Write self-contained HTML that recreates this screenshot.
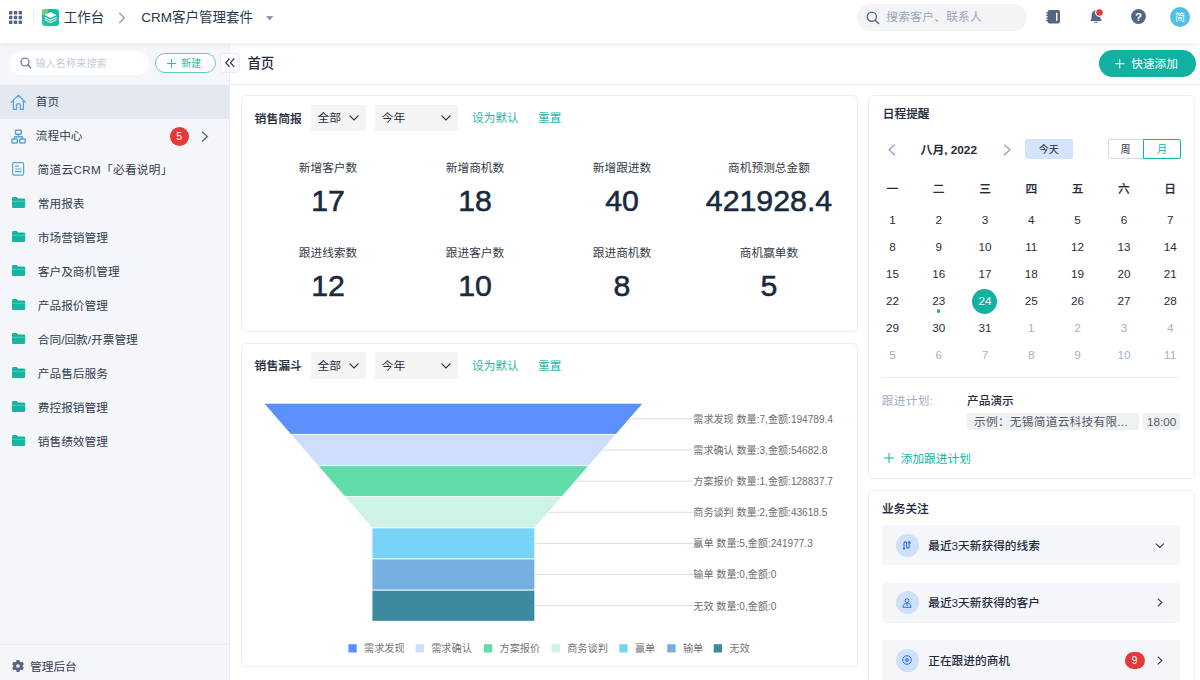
<!DOCTYPE html>
<html lang="zh-CN"><head><meta charset="utf-8"><title>CRM客户管理套件</title>
<style>
html,body{margin:0;padding:0;}
body{width:1200px;height:680px;overflow:hidden;background:#fff;position:relative;font-family:"Liberation Sans","Noto Sans CJK SC",sans-serif;}
.t{position:absolute;white-space:nowrap;font-family:"Liberation Sans","Noto Sans CJK SC",sans-serif;}
.b{position:absolute;box-sizing:border-box;}
svg{overflow:visible;}
svg text{font-family:"Liberation Sans","Noto Sans CJK SC",sans-serif;}
</style></head><body>
<div class="b" style="left:0.00px;top:42.00px;width:230.00px;height:638.00px;background:#f4f6f9;border-right:1px solid #e9ebef;"></div>
<div class="b" style="left:0.00px;top:0.00px;width:1200.00px;height:42.60px;background:#fff;box-shadow:0 1px 6px rgba(31,45,61,0.09);"></div>
<div class="b" style="left:230.00px;top:84.00px;width:970.00px;height:1.00px;background:#eceef0;"></div>
<svg class="b" style="left:9.20px;top:10.80px;" width="14" height="14" viewBox="0 0 14 14"><rect x="0.0" y="0.0" width="3.4" height="3.4" rx="0.6" fill="#566582"/><rect x="4.8" y="0.0" width="3.4" height="3.4" rx="0.6" fill="#566582"/><rect x="9.6" y="0.0" width="3.4" height="3.4" rx="0.6" fill="#566582"/><rect x="0.0" y="4.8" width="3.4" height="3.4" rx="0.6" fill="#566582"/><rect x="4.8" y="4.8" width="3.4" height="3.4" rx="0.6" fill="#566582"/><rect x="9.6" y="4.8" width="3.4" height="3.4" rx="0.6" fill="#566582"/><rect x="0.0" y="9.6" width="3.4" height="3.4" rx="0.6" fill="#566582"/><rect x="4.8" y="9.6" width="3.4" height="3.4" rx="0.6" fill="#566582"/><rect x="9.6" y="9.6" width="3.4" height="3.4" rx="0.6" fill="#566582"/></svg>
<div class="b" style="left:33.00px;top:9.00px;width:1.00px;height:17.00px;background:#eceef0;"></div>
<svg class="b" style="left:42.20px;top:8.80px;" width="17" height="17" viewBox="0 0 17 17"><defs><linearGradient id="lg" x1="0" y1="1" x2="1" y2="0"><stop offset="0" stop-color="#35cf92"/><stop offset="0.45" stop-color="#12b3a0"/><stop offset="1" stop-color="#17c0a6"/></linearGradient><clipPath id="lc"><rect x="0" y="0" width="17" height="17" rx="3.2"/></clipPath></defs>
<rect x="0" y="0" width="17" height="17" rx="3.2" fill="url(#lg)"/>
<g clip-path="url(#lc)"><circle cx="1.5" cy="1.5" r="4.6" fill="#6fcf7e"/><path d="M17 4 L17 17 L8 17 Z" fill="#22c7a4" opacity="0.6"/></g>
<path d="M8.5 3.1 L14.5 5.9 L8.5 9.0 L2.5 5.9 Z" fill="#fff"/>
<path d="M2.6 8.2 L8.5 11.2 L14.6 8.2" fill="none" stroke="#fff" stroke-width="1.1" stroke-linejoin="round"/>
<path d="M2.6 10.6 L8.5 13.6 L14.6 10.6" fill="none" stroke="#fff" stroke-width="1.1" stroke-linejoin="round" opacity="0.85"/></svg>
<div class="t" style="top:8.00px;font-size:13.5px;line-height:20px;color:#2a384b;left:63.80px;">工作台</div>
<svg class="b" style="left:118.00px;top:11.50px;" width="8" height="12" viewBox="0 0 8 12"><path d="M1.2 1 L6.4 6 L1.2 11" fill="none" stroke="#8a97b0" stroke-width="1.2"/></svg>
<div class="t" style="top:8.00px;font-size:13.5px;line-height:20px;color:#2a384b;left:141.30px;">CRM客户管理套件</div>
<svg class="b" style="left:266.00px;top:15.50px;" width="8" height="5" viewBox="0 0 8 5"><path d="M0 0 L7.4 0 L3.7 4.4 Z" fill="#8a97b0"/></svg>
<div class="b" style="left:857.00px;top:3.50px;width:169.50px;height:27.00px;background:#f3f4f6;border-radius:13.5px;"></div>
<svg class="b" style="left:865.50px;top:10.50px;" width="14" height="14" viewBox="0 0 14 14"><circle cx="5.8" cy="5.8" r="4.6" fill="none" stroke="#566582" stroke-width="1.3"/><path d="M9.2 9.2 L12.6 12.6" stroke="#566582" stroke-width="1.4" stroke-linecap="round"/></svg>
<div class="t" style="top:7.40px;font-size:11.7px;line-height:20px;color:#9aa5b8;left:886.20px;letter-spacing:0.3px;">搜索客户、联系人</div>
<svg class="b" style="left:1046.10px;top:9.50px;" width="14" height="14" viewBox="0 0 14 14"><rect x="1.6" y="0" width="12.4" height="13.5" rx="2" fill="#566582"/>
<rect x="10" y="2.8" width="1.4" height="8" fill="#fff"/>
<rect x="0" y="2.2" width="2.4" height="1.3" rx="0.6" fill="#566582"/><rect x="0" y="4.8" width="2.4" height="1.3" rx="0.6" fill="#566582"/><rect x="0" y="7.4" width="2.4" height="1.3" rx="0.6" fill="#566582"/><rect x="0" y="10" width="2.4" height="1.3" rx="0.6" fill="#566582"/></svg>
<svg class="b" style="left:1089.90px;top:9.90px;" width="12" height="14" viewBox="0 0 12 14"><path d="M6 0.4 C2.9 0.4 1.6 2.8 1.6 5.6 L1.6 8.6 L0.2 11 L11.8 11 L10.4 8.6 L10.4 5.6 C10.4 2.8 9.1 0.4 6 0.4 Z" fill="#566582"/>
<path d="M4.2 11.8 A1.9 1.9 0 0 0 7.8 11.8 Z" fill="#566582"/>
<circle cx="9.5" cy="2.5" r="4.4" fill="#fff"/><circle cx="9.5" cy="2.5" r="3.3" fill="#e5383b"/></svg>
<svg class="b" style="left:1130.90px;top:9.30px;" width="15" height="15" viewBox="0 0 15 15"><circle cx="7.5" cy="7.5" r="7.4" fill="#566582"/><text x="7.5" y="11.6" font-size="11.5" font-weight="700" fill="#fff" text-anchor="middle">?</text></svg>
<div class="b" style="left:1169.70px;top:6.80px;width:20.40px;height:20.40px;background:#4fbfe8;border-radius:10.2px;"></div>
<div class="t" style="top:7.50px;font-size:10px;line-height:20px;color:#fff;left:1170.00px;width:20px;text-align:center;">简</div>
<div class="b" style="left:10.00px;top:51.00px;width:138.50px;height:24.00px;background:#fff;border-radius:12px;"></div>
<svg class="b" style="left:19.50px;top:57.00px;" width="12" height="12" viewBox="0 0 12 12"><circle cx="5" cy="5" r="4" fill="none" stroke="#566582" stroke-width="1.1"/><path d="M8 8 L10.8 10.8" stroke="#566582" stroke-width="1.2" stroke-linecap="round"/></svg>
<div class="t" style="top:53.50px;font-size:10px;line-height:20px;color:#c3cbd9;left:35.40px;letter-spacing:0.2px;">输入名称来搜索</div>
<div class="b" style="left:154.70px;top:53.00px;width:61.60px;height:20.00px;background:#fff;border:1.1px solid #63cbc2;border-radius:10px;"></div>
<svg class="b" style="left:167.00px;top:58.50px;" width="9" height="9" viewBox="0 0 9 9"><path d="M4.5 0 V9 M0 4.5 H9" stroke="#2dbbb0" stroke-width="1"/></svg>
<div class="t" style="top:53.70px;font-size:10px;line-height:20px;color:#2dbbb0;left:181.30px;">新建</div>
<div class="b" style="left:220.40px;top:53.20px;width:19.20px;height:19.40px;background:#fff;border:1px solid #e9ecf0;border-radius:3px;"></div>
<svg class="b" style="left:225.20px;top:58.20px;" width="10" height="10" viewBox="0 0 10 10"><path d="M4.6 0.5 L0.8 4.7 L4.6 8.9 M9.2 0.5 L5.4 4.7 L9.2 8.9" fill="none" stroke="#2a384b" stroke-width="1.25"/></svg>
<div class="t" style="top:53.80px;font-size:13.4px;line-height:20px;color:#1f2d3d;font-weight:500;left:247.40px;">首页</div>
<div class="b" style="left:0.00px;top:85.00px;width:229.00px;height:34.00px;background:#e4e8f1;"></div>
<svg class="b" style="left:10.00px;top:94.00px;" width="17" height="17" viewBox="0 0 17 17"><path d="M1.2 8.4 L8.4 1.3 L15.6 8.4 M3.4 6.6 V15.3 H6.5 V11.4 A1.9 1.9 0 0 1 10.3 11.4 V15.3 H13.4 V6.6" fill="none" stroke="#5aa3d8" stroke-width="1.25" stroke-linejoin="round" stroke-linecap="round"/></svg>
<div class="t" style="top:92.20px;font-size:11.7px;line-height:20px;color:#313d4f;left:35.80px;">首页</div>
<svg class="b" style="left:11.00px;top:128.50px;" width="15" height="15" viewBox="0 0 15 15"><g fill="none" stroke="#5aa3d8" stroke-width="1.5"><rect x="4.5" y="1.2" width="5.8" height="4" rx="0.6"/><rect x="0.9" y="9.9" width="5.4" height="4" rx="0.6"/><rect x="8.7" y="9.9" width="5.4" height="4" rx="0.6"/><path d="M7.4 5.3 V7.7 M3.6 9.9 V8.4 A0.7 0.7 0 0 1 4.3 7.7 H10.7 A0.7 0.7 0 0 1 11.4 8.4 V9.9"/></g></svg>
<div class="t" style="top:126.10px;font-size:11.7px;line-height:20px;color:#313d4f;left:35.80px;">流程中心</div>
<div class="b" style="left:169.60px;top:126.50px;width:19.00px;height:19.00px;background:#e5383b;border-radius:9.5px;"></div>
<div class="t" style="top:126.30px;font-size:10.5px;line-height:20px;color:#fff;left:169.60px;width:19px;text-align:center;">5</div>
<svg class="b" style="left:200.50px;top:130.50px;" width="8" height="12" viewBox="0 0 8 12"><path d="M1 0.8 L6.4 5.6 L1 10.4" fill="none" stroke="#566582" stroke-width="1.3"/></svg>
<svg class="b" style="left:12.00px;top:162.00px;" width="13" height="14" viewBox="0 0 13 14"><g fill="none" stroke="#5aa3d8" stroke-width="1.2"><rect x="0.6" y="0.6" width="11" height="12.6" rx="1.4"/><path d="M3 4.2 H6.8 M3 7 H9.4 M3 9.7 H9.4"/></g></svg>
<div class="t" style="top:160.20px;font-size:11.7px;line-height:20px;color:#313d4f;left:37.60px;letter-spacing:0.28px;">简道云CRM「必看说明」</div>
<svg class="b" style="left:11.80px;top:197.20px;" width="14" height="11.5" viewBox="0 0 14 11.5"><path d="M0 1.4 A1.4 1.4 0 0 1 1.4 0 H4.6 L6.2 1.6 H11.9 A1.3 1.3 0 0 1 13.2 2.9 V9.7 A1.3 1.3 0 0 1 11.9 11 H1.3 A1.3 1.3 0 0 1 0 9.7 Z" fill="#14b5a1"/><path d="M0 4.3 H13.2" stroke="#7fd9cc" stroke-width="0.6"/></svg>
<div class="t" style="top:194.00px;font-size:11.7px;line-height:20px;color:#313d4f;left:37.80px;">常用报表</div>
<svg class="b" style="left:11.80px;top:231.20px;" width="14" height="11.5" viewBox="0 0 14 11.5"><path d="M0 1.4 A1.4 1.4 0 0 1 1.4 0 H4.6 L6.2 1.6 H11.9 A1.3 1.3 0 0 1 13.2 2.9 V9.7 A1.3 1.3 0 0 1 11.9 11 H1.3 A1.3 1.3 0 0 1 0 9.7 Z" fill="#14b5a1"/><path d="M0 4.3 H13.2" stroke="#7fd9cc" stroke-width="0.6"/></svg>
<div class="t" style="top:228.00px;font-size:11.7px;line-height:20px;color:#313d4f;left:37.80px;">市场营销管理</div>
<svg class="b" style="left:11.80px;top:265.20px;" width="14" height="11.5" viewBox="0 0 14 11.5"><path d="M0 1.4 A1.4 1.4 0 0 1 1.4 0 H4.6 L6.2 1.6 H11.9 A1.3 1.3 0 0 1 13.2 2.9 V9.7 A1.3 1.3 0 0 1 11.9 11 H1.3 A1.3 1.3 0 0 1 0 9.7 Z" fill="#14b5a1"/><path d="M0 4.3 H13.2" stroke="#7fd9cc" stroke-width="0.6"/></svg>
<div class="t" style="top:262.00px;font-size:11.7px;line-height:20px;color:#313d4f;left:37.80px;">客户及商机管理</div>
<svg class="b" style="left:11.80px;top:299.20px;" width="14" height="11.5" viewBox="0 0 14 11.5"><path d="M0 1.4 A1.4 1.4 0 0 1 1.4 0 H4.6 L6.2 1.6 H11.9 A1.3 1.3 0 0 1 13.2 2.9 V9.7 A1.3 1.3 0 0 1 11.9 11 H1.3 A1.3 1.3 0 0 1 0 9.7 Z" fill="#14b5a1"/><path d="M0 4.3 H13.2" stroke="#7fd9cc" stroke-width="0.6"/></svg>
<div class="t" style="top:296.00px;font-size:11.7px;line-height:20px;color:#313d4f;left:37.80px;">产品报价管理</div>
<svg class="b" style="left:11.80px;top:333.20px;" width="14" height="11.5" viewBox="0 0 14 11.5"><path d="M0 1.4 A1.4 1.4 0 0 1 1.4 0 H4.6 L6.2 1.6 H11.9 A1.3 1.3 0 0 1 13.2 2.9 V9.7 A1.3 1.3 0 0 1 11.9 11 H1.3 A1.3 1.3 0 0 1 0 9.7 Z" fill="#14b5a1"/><path d="M0 4.3 H13.2" stroke="#7fd9cc" stroke-width="0.6"/></svg>
<div class="t" style="top:330.00px;font-size:11.7px;line-height:20px;color:#313d4f;left:37.80px;">合同/回款/开票管理</div>
<svg class="b" style="left:11.80px;top:367.20px;" width="14" height="11.5" viewBox="0 0 14 11.5"><path d="M0 1.4 A1.4 1.4 0 0 1 1.4 0 H4.6 L6.2 1.6 H11.9 A1.3 1.3 0 0 1 13.2 2.9 V9.7 A1.3 1.3 0 0 1 11.9 11 H1.3 A1.3 1.3 0 0 1 0 9.7 Z" fill="#14b5a1"/><path d="M0 4.3 H13.2" stroke="#7fd9cc" stroke-width="0.6"/></svg>
<div class="t" style="top:364.00px;font-size:11.7px;line-height:20px;color:#313d4f;left:37.80px;">产品售后服务</div>
<svg class="b" style="left:11.80px;top:401.20px;" width="14" height="11.5" viewBox="0 0 14 11.5"><path d="M0 1.4 A1.4 1.4 0 0 1 1.4 0 H4.6 L6.2 1.6 H11.9 A1.3 1.3 0 0 1 13.2 2.9 V9.7 A1.3 1.3 0 0 1 11.9 11 H1.3 A1.3 1.3 0 0 1 0 9.7 Z" fill="#14b5a1"/><path d="M0 4.3 H13.2" stroke="#7fd9cc" stroke-width="0.6"/></svg>
<div class="t" style="top:398.00px;font-size:11.7px;line-height:20px;color:#313d4f;left:37.80px;">费控报销管理</div>
<svg class="b" style="left:11.80px;top:435.20px;" width="14" height="11.5" viewBox="0 0 14 11.5"><path d="M0 1.4 A1.4 1.4 0 0 1 1.4 0 H4.6 L6.2 1.6 H11.9 A1.3 1.3 0 0 1 13.2 2.9 V9.7 A1.3 1.3 0 0 1 11.9 11 H1.3 A1.3 1.3 0 0 1 0 9.7 Z" fill="#14b5a1"/><path d="M0 4.3 H13.2" stroke="#7fd9cc" stroke-width="0.6"/></svg>
<div class="t" style="top:432.00px;font-size:11.7px;line-height:20px;color:#313d4f;left:37.80px;">销售绩效管理</div>
<div class="b" style="left:0.00px;top:643.80px;width:229.00px;height:1.00px;background:#e9ebef;"></div>
<svg class="b" style="left:12.40px;top:660.10px;" width="12" height="12" viewBox="0 0 12 12"><g transform="translate(6,6)"><circle r="3.3" fill="none" stroke="#566582" stroke-width="2.9"/><rect x="-1.55" y="-6" width="3.1" height="2.6" rx="0.4" fill="#566582" transform="rotate(0)"/><rect x="-1.55" y="-6" width="3.1" height="2.6" rx="0.4" fill="#566582" transform="rotate(60)"/><rect x="-1.55" y="-6" width="3.1" height="2.6" rx="0.4" fill="#566582" transform="rotate(120)"/><rect x="-1.55" y="-6" width="3.1" height="2.6" rx="0.4" fill="#566582" transform="rotate(180)"/><rect x="-1.55" y="-6" width="3.1" height="2.6" rx="0.4" fill="#566582" transform="rotate(240)"/><rect x="-1.55" y="-6" width="3.1" height="2.6" rx="0.4" fill="#566582" transform="rotate(300)"/></g></svg>
<div class="t" style="top:656.90px;font-size:11.7px;line-height:20px;color:#313d4f;left:30.00px;">管理后台</div>
<div class="b" style="left:1098.50px;top:50.00px;width:97.50px;height:27.00px;background:#12b1a2;border-radius:13.5px;"></div>
<svg class="b" style="left:1115.00px;top:59.00px;" width="9.5" height="9.5" viewBox="0 0 9.5 9.5"><path d="M4.75 0 V9.5 M0 4.75 H9.5" stroke="#fff" stroke-width="1"/></svg>
<div class="t" style="top:54.10px;font-size:11.7px;line-height:20px;color:#fff;left:1131.20px;">快速添加</div>
<div class="b" style="left:240.70px;top:95.20px;width:617.00px;height:237.00px;background:#fff;border:1px solid #edeef0;border-radius:5px;"></div>
<div class="t" style="top:108.50px;font-size:11.8px;line-height:20px;color:#1f2d3d;font-weight:500;left:254.60px;-webkit-text-stroke:0.18px;">销售简报</div>
<div class="b" style="left:310.60px;top:104.70px;width:55.80px;height:26.80px;background:#f4f4f5;border-radius:2px;"></div>
<div class="t" style="top:108.20px;font-size:11.8px;line-height:20px;color:#1f2d3d;left:317.40px;">全部</div>
<svg class="b" style="left:349.30px;top:115.20px;" width="10" height="6" viewBox="0 0 10 6"><path d="M0.6 0.6 L5 5 L9.4 0.6" fill="none" stroke="#1f2d3d" stroke-width="1.1"/></svg>
<div class="b" style="left:375.00px;top:104.70px;width:83.00px;height:26.80px;background:#f4f4f5;border-radius:2px;"></div>
<div class="t" style="top:108.20px;font-size:11.8px;line-height:20px;color:#1f2d3d;left:381.60px;">今年</div>
<svg class="b" style="left:440.80px;top:115.20px;" width="10" height="6" viewBox="0 0 10 6"><path d="M0.6 0.6 L5 5 L9.4 0.6" fill="none" stroke="#1f2d3d" stroke-width="1.1"/></svg>
<div class="t" style="top:108.20px;font-size:11.7px;line-height:20px;color:#1fb6aa;left:472.00px;">设为默认</div>
<div class="t" style="top:108.20px;font-size:11.7px;line-height:20px;color:#1fb6aa;left:538.00px;">重置</div>
<div class="t" style="top:158.10px;font-size:11.7px;line-height:20px;color:#333a45;left:258.00px;width:140px;text-align:center;">新增客户数</div>
<div class="t" style="top:181.00px;font-size:30.3px;line-height:40px;color:#1a2a3d;left:248.00px;width:160px;text-align:center;-webkit-text-stroke:0.55px #1a2a3d;">17</div>
<div class="t" style="top:158.10px;font-size:11.7px;line-height:20px;color:#333a45;left:405.00px;width:140px;text-align:center;">新增商机数</div>
<div class="t" style="top:181.00px;font-size:30.3px;line-height:40px;color:#1a2a3d;left:395.00px;width:160px;text-align:center;-webkit-text-stroke:0.55px #1a2a3d;">18</div>
<div class="t" style="top:158.10px;font-size:11.7px;line-height:20px;color:#333a45;left:552.00px;width:140px;text-align:center;">新增跟进数</div>
<div class="t" style="top:181.00px;font-size:30.3px;line-height:40px;color:#1a2a3d;left:542.00px;width:160px;text-align:center;-webkit-text-stroke:0.55px #1a2a3d;">40</div>
<div class="t" style="top:158.10px;font-size:11.7px;line-height:20px;color:#333a45;left:699.00px;width:140px;text-align:center;">商机预测总金额</div>
<div class="t" style="top:181.00px;font-size:30.3px;line-height:40px;color:#1a2a3d;left:689.00px;width:160px;text-align:center;-webkit-text-stroke:0.55px #1a2a3d;">421928.4</div>
<div class="t" style="top:242.90px;font-size:11.7px;line-height:20px;color:#333a45;left:258.00px;width:140px;text-align:center;">跟进线索数</div>
<div class="t" style="top:265.80px;font-size:30.3px;line-height:40px;color:#1a2a3d;left:248.00px;width:160px;text-align:center;-webkit-text-stroke:0.55px #1a2a3d;">12</div>
<div class="t" style="top:242.90px;font-size:11.7px;line-height:20px;color:#333a45;left:405.00px;width:140px;text-align:center;">跟进客户数</div>
<div class="t" style="top:265.80px;font-size:30.3px;line-height:40px;color:#1a2a3d;left:395.00px;width:160px;text-align:center;-webkit-text-stroke:0.55px #1a2a3d;">10</div>
<div class="t" style="top:242.90px;font-size:11.7px;line-height:20px;color:#333a45;left:552.00px;width:140px;text-align:center;">跟进商机数</div>
<div class="t" style="top:265.80px;font-size:30.3px;line-height:40px;color:#1a2a3d;left:542.00px;width:160px;text-align:center;-webkit-text-stroke:0.55px #1a2a3d;">8</div>
<div class="t" style="top:242.90px;font-size:11.7px;line-height:20px;color:#333a45;left:699.00px;width:140px;text-align:center;">商机赢单数</div>
<div class="t" style="top:265.80px;font-size:30.3px;line-height:40px;color:#1a2a3d;left:689.00px;width:160px;text-align:center;-webkit-text-stroke:0.55px #1a2a3d;">5</div>
<div class="b" style="left:240.70px;top:343.00px;width:617.00px;height:324.40px;background:#fff;border:1px solid #edeef0;border-radius:5px;"></div>
<div class="t" style="top:355.80px;font-size:11.8px;line-height:20px;color:#1f2d3d;font-weight:500;left:254.60px;-webkit-text-stroke:0.18px;">销售漏斗</div>
<div class="b" style="left:310.60px;top:352.00px;width:55.80px;height:26.80px;background:#f4f4f5;border-radius:2px;"></div>
<div class="t" style="top:355.50px;font-size:11.8px;line-height:20px;color:#1f2d3d;left:317.40px;">全部</div>
<svg class="b" style="left:349.30px;top:362.50px;" width="10" height="6" viewBox="0 0 10 6"><path d="M0.6 0.6 L5 5 L9.4 0.6" fill="none" stroke="#1f2d3d" stroke-width="1.1"/></svg>
<div class="b" style="left:375.00px;top:352.00px;width:83.00px;height:26.80px;background:#f4f4f5;border-radius:2px;"></div>
<div class="t" style="top:355.50px;font-size:11.8px;line-height:20px;color:#1f2d3d;left:381.60px;">今年</div>
<svg class="b" style="left:440.80px;top:362.50px;" width="10" height="6" viewBox="0 0 10 6"><path d="M0.6 0.6 L5 5 L9.4 0.6" fill="none" stroke="#1f2d3d" stroke-width="1.1"/></svg>
<div class="t" style="top:355.50px;font-size:11.7px;line-height:20px;color:#1fb6aa;left:472.00px;">设为默认</div>
<div class="t" style="top:355.50px;font-size:11.7px;line-height:20px;color:#1fb6aa;left:538.00px;">重置</div>
<svg class="b" style="left:0.00px;top:0.00px;" width="1200" height="680" viewBox="0 0 1200 680"><path d="M263.80 403.30 L643.00 403.30 L615.95 434.44 L290.85 434.44 Z" fill="#5b8ff9" stroke="#fff" stroke-width="0.8"/><path d="M629.47 418.87 H693" stroke="#d4d4d4" stroke-width="0.8"/><text x="693.3" y="422.67" font-size="10.1" fill="#6e6e6e">需求发现 数量:7,金额:194789.4</text><path d="M290.85 434.44 L615.95 434.44 L588.90 465.58 L317.90 465.58 Z" fill="#cdddfd" stroke="#fff" stroke-width="0.8"/><path d="M602.42 450.01 H693" stroke="#d4d4d4" stroke-width="0.8"/><text x="693.3" y="453.81" font-size="10.1" fill="#6e6e6e">需求确认 数量:3,金额:54682.8</text><path d="M317.90 465.58 L588.90 465.58 L561.85 496.72 L344.95 496.72 Z" fill="#61ddaa" stroke="#fff" stroke-width="0.8"/><path d="M575.38 481.15 H693" stroke="#d4d4d4" stroke-width="0.8"/><text x="693.3" y="484.95" font-size="10.1" fill="#6e6e6e">方案报价 数量:1,金额:128837.7</text><path d="M344.95 496.72 L561.85 496.72 L534.80 527.86 L372.00 527.86 Z" fill="#cdf3e4" stroke="#fff" stroke-width="0.8"/><path d="M548.32 512.29 H693" stroke="#d4d4d4" stroke-width="0.8"/><text x="693.3" y="516.09" font-size="10.1" fill="#6e6e6e">商务谈判 数量:2,金额:43618.5</text><path d="M372.00 527.86 L534.80 527.86 L534.80 559.00 L372.00 559.00 Z" fill="#78d3f8" stroke="#fff" stroke-width="0.8"/><path d="M534.80 543.43 H693" stroke="#d4d4d4" stroke-width="0.8"/><text x="693.3" y="547.23" font-size="10.1" fill="#6e6e6e">赢单 数量:5,金额:241977.3</text><path d="M372.00 559.00 L534.80 559.00 L534.80 590.14 L372.00 590.14 Z" fill="#74afe0" stroke="#fff" stroke-width="0.8"/><path d="M534.80 574.57 H693" stroke="#d4d4d4" stroke-width="0.8"/><text x="693.3" y="578.37" font-size="10.1" fill="#6e6e6e">输单 数量:0,金额:0</text><path d="M372.00 590.14 L534.80 590.14 L534.80 621.28 L372.00 621.28 Z" fill="#3b8a9f" stroke="#fff" stroke-width="0.8"/><path d="M534.80 605.71 H693" stroke="#d4d4d4" stroke-width="0.8"/><text x="693.3" y="609.51" font-size="10.1" fill="#6e6e6e">无效 数量:0,金额:0</text><rect x="348.4" y="644.2" width="8.3" height="8.3" fill="#5b8ff9"/><text x="364.0" y="652.2" font-size="10.2" fill="#747474">需求发现</text><rect x="415.6" y="644.2" width="8.3" height="8.3" fill="#cdddfd"/><text x="431.2" y="652.2" font-size="10.2" fill="#747474">需求确认</text><rect x="483.9" y="644.2" width="8.3" height="8.3" fill="#61ddaa"/><text x="499.5" y="652.2" font-size="10.2" fill="#747474">方案报价</text><rect x="551.6" y="644.2" width="8.3" height="8.3" fill="#cdf3e4"/><text x="567.2" y="652.2" font-size="10.2" fill="#747474">商务谈判</text><rect x="619.3" y="644.2" width="8.3" height="8.3" fill="#78d3f8"/><text x="634.9" y="652.2" font-size="10.2" fill="#747474">赢单</text><rect x="667.3" y="644.2" width="8.3" height="8.3" fill="#74afe0"/><text x="682.9" y="652.2" font-size="10.2" fill="#747474">输单</text><rect x="713.7" y="644.2" width="8.3" height="8.3" fill="#3b8a9f"/><text x="729.3" y="652.2" font-size="10.2" fill="#747474">无效</text></svg>
<div class="b" style="left:867.50px;top:95.20px;width:327.50px;height:384.20px;background:#fff;border:1px solid #edeef0;border-radius:5px;"></div>
<div class="t" style="top:103.80px;font-size:11.7px;line-height:20px;color:#1f2d3d;font-weight:500;left:882.80px;-webkit-text-stroke:0.18px;">日程提醒</div>
<svg class="b" style="left:887.50px;top:144.00px;" width="8" height="12" viewBox="0 0 8 12"><path d="M7 0.6 L1 5.8 L7 11" fill="none" stroke="#8293b3" stroke-width="1.1"/></svg>
<div class="t" style="top:140.10px;font-size:11.8px;line-height:20px;color:#1f2d3d;font-weight:700;left:920.60px;">八月, 2022</div>
<svg class="b" style="left:1002.50px;top:144.00px;" width="8" height="12" viewBox="0 0 8 12"><path d="M1 0.6 L7 5.8 L1 11" fill="none" stroke="#8293b3" stroke-width="1.1"/></svg>
<div class="b" style="left:1024.50px;top:139.00px;width:48.50px;height:20.00px;background:#d3e4fb;border-radius:2px;"></div>
<div class="t" style="top:139.50px;font-size:10px;line-height:20px;color:#1f2d3d;left:1024.70px;width:48px;text-align:center;">今天</div>
<div class="b" style="left:1107.50px;top:139.00px;width:36.50px;height:20.00px;background:#fff;border:1px solid #d9dbe0;border-radius:2px 0 0 2px;"></div>
<div class="t" style="top:139.50px;font-size:10px;line-height:20px;color:#1f2d3d;left:1107.50px;width:36px;text-align:center;">周</div>
<div class="b" style="left:1143.40px;top:139.00px;width:37.30px;height:20.00px;background:#fff;border:1px solid #0db3a6;border-radius:0 2px 2px 0;"></div>
<div class="t" style="top:139.50px;font-size:10px;line-height:20px;color:#0db3a6;left:1144.00px;width:36px;text-align:center;">月</div>
<div class="t" style="top:178.50px;font-size:11.7px;line-height:20px;color:#1f2d3d;font-weight:500;left:872.40px;width:40px;text-align:center;-webkit-text-stroke:0.15px;">一</div>
<div class="t" style="top:178.50px;font-size:11.7px;line-height:20px;color:#1f2d3d;font-weight:500;left:918.70px;width:40px;text-align:center;-webkit-text-stroke:0.15px;">二</div>
<div class="t" style="top:178.50px;font-size:11.7px;line-height:20px;color:#1f2d3d;font-weight:500;left:965.00px;width:40px;text-align:center;-webkit-text-stroke:0.15px;">三</div>
<div class="t" style="top:178.50px;font-size:11.7px;line-height:20px;color:#1f2d3d;font-weight:500;left:1011.30px;width:40px;text-align:center;-webkit-text-stroke:0.15px;">四</div>
<div class="t" style="top:178.50px;font-size:11.7px;line-height:20px;color:#1f2d3d;font-weight:500;left:1057.60px;width:40px;text-align:center;-webkit-text-stroke:0.15px;">五</div>
<div class="t" style="top:178.50px;font-size:11.7px;line-height:20px;color:#1f2d3d;font-weight:500;left:1103.90px;width:40px;text-align:center;-webkit-text-stroke:0.15px;">六</div>
<div class="t" style="top:178.50px;font-size:11.7px;line-height:20px;color:#1f2d3d;font-weight:500;left:1150.20px;width:40px;text-align:center;-webkit-text-stroke:0.15px;">日</div>
<div class="b" style="left:972.20px;top:288.90px;width:25.20px;height:25.20px;background:#12b1a2;border-radius:12.6px;"></div>
<div class="b" style="left:936.90px;top:309.00px;width:3.60px;height:3.60px;background:#12b1a2;border-radius:1.8px;"></div>
<div class="t" style="top:209.50px;font-size:11.7px;line-height:20px;color:#1f2d3d;left:872.40px;width:40px;text-align:center;">1</div>
<div class="t" style="top:209.50px;font-size:11.7px;line-height:20px;color:#1f2d3d;left:918.70px;width:40px;text-align:center;">2</div>
<div class="t" style="top:209.50px;font-size:11.7px;line-height:20px;color:#1f2d3d;left:965.00px;width:40px;text-align:center;">3</div>
<div class="t" style="top:209.50px;font-size:11.7px;line-height:20px;color:#1f2d3d;left:1011.30px;width:40px;text-align:center;">4</div>
<div class="t" style="top:209.50px;font-size:11.7px;line-height:20px;color:#1f2d3d;left:1057.60px;width:40px;text-align:center;">5</div>
<div class="t" style="top:209.50px;font-size:11.7px;line-height:20px;color:#1f2d3d;left:1103.90px;width:40px;text-align:center;">6</div>
<div class="t" style="top:209.50px;font-size:11.7px;line-height:20px;color:#1f2d3d;left:1150.20px;width:40px;text-align:center;">7</div>
<div class="t" style="top:236.80px;font-size:11.7px;line-height:20px;color:#1f2d3d;left:872.40px;width:40px;text-align:center;">8</div>
<div class="t" style="top:236.80px;font-size:11.7px;line-height:20px;color:#1f2d3d;left:918.70px;width:40px;text-align:center;">9</div>
<div class="t" style="top:236.80px;font-size:11.7px;line-height:20px;color:#1f2d3d;left:965.00px;width:40px;text-align:center;">10</div>
<div class="t" style="top:236.80px;font-size:11.7px;line-height:20px;color:#1f2d3d;left:1011.30px;width:40px;text-align:center;">11</div>
<div class="t" style="top:236.80px;font-size:11.7px;line-height:20px;color:#1f2d3d;left:1057.60px;width:40px;text-align:center;">12</div>
<div class="t" style="top:236.80px;font-size:11.7px;line-height:20px;color:#1f2d3d;left:1103.90px;width:40px;text-align:center;">13</div>
<div class="t" style="top:236.80px;font-size:11.7px;line-height:20px;color:#1f2d3d;left:1150.20px;width:40px;text-align:center;">14</div>
<div class="t" style="top:264.00px;font-size:11.7px;line-height:20px;color:#1f2d3d;left:872.40px;width:40px;text-align:center;">15</div>
<div class="t" style="top:264.00px;font-size:11.7px;line-height:20px;color:#1f2d3d;left:918.70px;width:40px;text-align:center;">16</div>
<div class="t" style="top:264.00px;font-size:11.7px;line-height:20px;color:#1f2d3d;left:965.00px;width:40px;text-align:center;">17</div>
<div class="t" style="top:264.00px;font-size:11.7px;line-height:20px;color:#1f2d3d;left:1011.30px;width:40px;text-align:center;">18</div>
<div class="t" style="top:264.00px;font-size:11.7px;line-height:20px;color:#1f2d3d;left:1057.60px;width:40px;text-align:center;">19</div>
<div class="t" style="top:264.00px;font-size:11.7px;line-height:20px;color:#1f2d3d;left:1103.90px;width:40px;text-align:center;">20</div>
<div class="t" style="top:264.00px;font-size:11.7px;line-height:20px;color:#1f2d3d;left:1150.20px;width:40px;text-align:center;">21</div>
<div class="t" style="top:291.10px;font-size:11.7px;line-height:20px;color:#1f2d3d;left:872.40px;width:40px;text-align:center;">22</div>
<div class="t" style="top:291.10px;font-size:11.7px;line-height:20px;color:#1f2d3d;left:918.70px;width:40px;text-align:center;">23</div>
<div class="t" style="top:291.10px;font-size:11.7px;line-height:20px;color:#fff;left:965.00px;width:40px;text-align:center;">24</div>
<div class="t" style="top:291.10px;font-size:11.7px;line-height:20px;color:#1f2d3d;left:1011.30px;width:40px;text-align:center;">25</div>
<div class="t" style="top:291.10px;font-size:11.7px;line-height:20px;color:#1f2d3d;left:1057.60px;width:40px;text-align:center;">26</div>
<div class="t" style="top:291.10px;font-size:11.7px;line-height:20px;color:#1f2d3d;left:1103.90px;width:40px;text-align:center;">27</div>
<div class="t" style="top:291.10px;font-size:11.7px;line-height:20px;color:#1f2d3d;left:1150.20px;width:40px;text-align:center;">28</div>
<div class="t" style="top:318.20px;font-size:11.7px;line-height:20px;color:#1f2d3d;left:872.40px;width:40px;text-align:center;">29</div>
<div class="t" style="top:318.20px;font-size:11.7px;line-height:20px;color:#1f2d3d;left:918.70px;width:40px;text-align:center;">30</div>
<div class="t" style="top:318.20px;font-size:11.7px;line-height:20px;color:#1f2d3d;left:965.00px;width:40px;text-align:center;">31</div>
<div class="t" style="top:318.20px;font-size:11.7px;line-height:20px;color:#a3b1c9;left:1011.30px;width:40px;text-align:center;">1</div>
<div class="t" style="top:318.20px;font-size:11.7px;line-height:20px;color:#a3b1c9;left:1057.60px;width:40px;text-align:center;">2</div>
<div class="t" style="top:318.20px;font-size:11.7px;line-height:20px;color:#a3b1c9;left:1103.90px;width:40px;text-align:center;">3</div>
<div class="t" style="top:318.20px;font-size:11.7px;line-height:20px;color:#a3b1c9;left:1150.20px;width:40px;text-align:center;">4</div>
<div class="t" style="top:345.40px;font-size:11.7px;line-height:20px;color:#a3b1c9;left:872.40px;width:40px;text-align:center;">5</div>
<div class="t" style="top:345.40px;font-size:11.7px;line-height:20px;color:#a3b1c9;left:918.70px;width:40px;text-align:center;">6</div>
<div class="t" style="top:345.40px;font-size:11.7px;line-height:20px;color:#a3b1c9;left:965.00px;width:40px;text-align:center;">7</div>
<div class="t" style="top:345.40px;font-size:11.7px;line-height:20px;color:#a3b1c9;left:1011.30px;width:40px;text-align:center;">8</div>
<div class="t" style="top:345.40px;font-size:11.7px;line-height:20px;color:#a3b1c9;left:1057.60px;width:40px;text-align:center;">9</div>
<div class="t" style="top:345.40px;font-size:11.7px;line-height:20px;color:#a3b1c9;left:1103.90px;width:40px;text-align:center;">10</div>
<div class="t" style="top:345.40px;font-size:11.7px;line-height:20px;color:#a3b1c9;left:1150.20px;width:40px;text-align:center;">11</div>
<div class="b" style="left:882.30px;top:377.10px;width:298.20px;height:1.00px;background:#eaecef;"></div>
<div class="t" style="top:391.40px;font-size:11.7px;line-height:20px;color:#9fadc4;left:881.80px;letter-spacing:0.3px;">跟进计划:</div>
<div class="t" style="top:391.20px;font-size:11.7px;line-height:20px;color:#1f2d3d;font-weight:500;left:967.00px;">产品演示</div>
<div class="b" style="left:967.00px;top:413.30px;width:171.60px;height:16.30px;background:#eff0f2;border-radius:2px;"></div>
<div class="t" style="top:411.70px;font-size:11.7px;line-height:20px;color:#525a66;left:974.00px;letter-spacing:0.26px;">示例：无锡简道云科技有限...</div>
<div class="b" style="left:1142.80px;top:413.30px;width:37.70px;height:16.30px;background:#eff0f2;border-radius:2px;"></div>
<div class="t" style="top:411.90px;font-size:11.7px;line-height:20px;color:#525a66;left:1141.60px;width:40px;text-align:center;">18:00</div>
<svg class="b" style="left:884.00px;top:453.40px;" width="10" height="10" viewBox="0 0 10 10"><path d="M5 0 V10 M0 5 H10" stroke="#0db3a6" stroke-width="1"/></svg>
<div class="t" style="top:448.70px;font-size:11.7px;line-height:20px;color:#0db3a6;left:900.70px;">添加跟进计划</div>
<div class="b" style="left:867.50px;top:490.20px;width:327.50px;height:209.80px;background:#fff;border:1px solid #edeef0;border-radius:5px;"></div>
<div class="t" style="top:498.50px;font-size:11.7px;line-height:20px;color:#1f2d3d;font-weight:500;left:882.00px;-webkit-text-stroke:0.18px;">业务关注</div>
<div class="b" style="left:882.20px;top:525.25px;width:298.30px;height:40.20px;background:#f4f6fa;border-radius:3px;"></div>
<div class="b" style="left:895.60px;top:533.75px;width:23.20px;height:23.20px;background:#cfe0fb;border-radius:11.6px;"></div>
<svg class="b" style="left:902.20px;top:540.35px;" width="10" height="10" viewBox="0 0 10 10"><g fill="none" stroke="#2f6fe0" stroke-width="1.1" stroke-linecap="round"><path d="M2 8.3 V3.2 A1.3 1.3 0 0 1 4.6 3.2 V6.8 A1.3 1.3 0 0 0 7.2 6.8 V1.8"/><path d="M6 2.8 L7.2 1.6 L8.4 2.8"/><circle cx="2" cy="8.6" r="0.5" fill="#2f6fe0"/></g></svg>
<div class="t" style="top:535.95px;font-size:11.7px;line-height:20px;color:#1f2d3d;font-weight:500;left:928.20px;">最近3天新获得的线索</div>
<svg class="b" style="left:1155.00px;top:542.85px;" width="10" height="6" viewBox="0 0 10 6"><path d="M0.8 0.6 L4.8 4.4 L8.8 0.6" fill="none" stroke="#2d3a4d" stroke-width="1.1"/></svg>
<div class="b" style="left:882.20px;top:582.50px;width:298.30px;height:40.20px;background:#f4f6fa;border-radius:3px;"></div>
<div class="b" style="left:895.60px;top:591.00px;width:23.20px;height:23.20px;background:#cfe0fb;border-radius:11.6px;"></div>
<svg class="b" style="left:902.20px;top:597.60px;" width="10" height="10" viewBox="0 0 10 10"><g fill="none" stroke="#2f6fe0" stroke-width="1"><circle cx="5" cy="2.6" r="1.9"/><path d="M1 9.3 C1 6.4 2.6 5.2 5 5.2 C7.4 5.2 9 6.4 9 9.3 Z" stroke-linejoin="round"/><path d="M5 5.4 V8"/></g></svg>
<div class="t" style="top:593.20px;font-size:11.7px;line-height:20px;color:#1f2d3d;font-weight:500;left:928.20px;">最近3天新获得的客户</div>
<svg class="b" style="left:1157.00px;top:598.10px;" width="6" height="10" viewBox="0 0 6 10"><path d="M0.8 0.6 L4.8 4.5 L0.8 8.4" fill="none" stroke="#2d3a4d" stroke-width="1.1"/></svg>
<div class="b" style="left:882.20px;top:640.30px;width:298.30px;height:40.20px;background:#f4f6fa;border-radius:3px;"></div>
<div class="b" style="left:895.60px;top:648.80px;width:23.20px;height:23.20px;background:#cfe0fb;border-radius:11.6px;"></div>
<svg class="b" style="left:902.20px;top:655.40px;" width="10" height="10" viewBox="0 0 10 10"><g fill="none" stroke="#2f6fe0" stroke-width="1"><circle cx="5" cy="5" r="4.3"/><path d="M5 2.8 L7.2 5 L5 7.2 L2.8 5 Z" stroke-width="0.9"/><circle cx="5" cy="5" r="0.5" fill="#2f6fe0"/></g></svg>
<div class="t" style="top:651.00px;font-size:11.7px;line-height:20px;color:#1f2d3d;font-weight:500;left:928.20px;">正在跟进的商机</div>
<svg class="b" style="left:1157.00px;top:655.90px;" width="6" height="10" viewBox="0 0 6 10"><path d="M0.8 0.6 L4.8 4.5 L0.8 8.4" fill="none" stroke="#2d3a4d" stroke-width="1.1"/></svg>
<div class="b" style="left:1124.50px;top:651.60px;width:20.10px;height:17.20px;background:#e5383b;border-radius:8.6px;"></div>
<div class="t" style="top:650.60px;font-size:10px;line-height:20px;color:#fff;left:1124.60px;width:20px;text-align:center;">9</div>
</body></html>
